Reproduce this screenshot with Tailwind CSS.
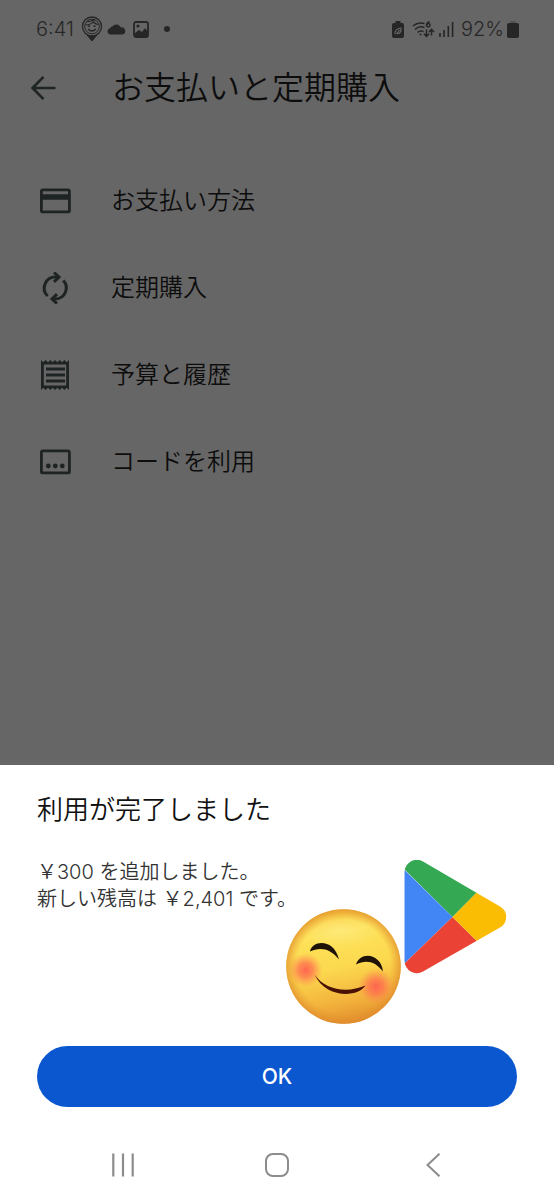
<!DOCTYPE html>
<html lang="ja">
<head>
<meta charset="utf-8">
<meta name="viewport" content="width=device-width, initial-scale=1">
<title>お支払いと定期購入</title>
<script src="https://cdn.jsdelivr.net/npm/@tailwindcss/browser@4"></script>
</head>
<body class="flex min-h-screen flex-col bg-[#666666] font-['Inter','Noto_Sans_CJK_JP',sans-serif] text-[#0d0d0d]">

<!-- Status bar -->
<div class="flex h-[58px] items-center justify-between pr-[35px] pl-9 text-xl text-[#262626]">
  <div class="flex items-center">
    <span class="font-[350]">6:41</span>
    <svg class="ml-[7px] h-[26px] w-[22px]" viewBox="0 0 22 26" fill="none" stroke="currentColor" aria-hidden="true">
      <path d="M6 19h10l-5 6z" fill="currentColor"/>
      <circle cx="11" cy="10.500" r="9.500" stroke-width="1.300" fill="#666666"/>
      <circle cx="11" cy="10.500" r="7.300" stroke-width="1"/>
      <path d="M4.500 9c3 0 6-1 8-3.500 1 2 3 3 5 3M6 5.500c3 .5 6-1 8-2" stroke-width="1.200"/>
      <path d="M7 10.500q1-1 2 0M12.500 10.500q1-1 2 0M7 13q4 4 8 0" stroke-width="1.200"/>
    </svg>
    <svg class="ml-1 h-3 w-[19px]" viewBox="0 0 19 12" fill="currentColor" aria-hidden="true"><path d="M3.500 11.500A3.200 3.200 0 0 1 3 5.200 3 3 0 0 1 5.200 3.500 5 5 0 0 1 13.800 4.500 3.600 3.600 0 0 1 15.500 11.500z"/></svg>
    <svg class="ml-[7px] h-[17px] w-4" viewBox="0 0 16 17" aria-hidden="true"><rect x="1" y="1" width="14" height="15" rx="2" fill="none" stroke="currentColor" stroke-width="1.800"/><path d="M2 12l4-3 3 2 3-4 3 4v4.500H2z" fill="currentColor"/><circle cx="5" cy="5" r="1.600" fill="currentColor"/></svg>
    <svg class="ml-[15px] size-1.5" viewBox="0 0 6 6" fill="currentColor" aria-hidden="true"><circle cx="3" cy="3" r="3"/></svg>
  </div>
  <div class="flex items-center">
    <svg class="h-[17px] w-3" viewBox="0 0 12 17" aria-hidden="true"><path d="M3.500 0h5v2H10a2 2 0 0 1 2 2v11a2 2 0 0 1-2 2H2a2 2 0 0 1-2-2V4a2 2 0 0 1 2-2h1.500z" fill="currentColor"/><path d="M3 13q-.5-5 6-6 .5 6-4 5.500L7.500 9" fill="none" stroke="#666666" stroke-width="1.200"/></svg>
    <svg class="ml-2 h-[18px] w-[23px]" viewBox="0 0 23 18" fill="none" stroke="currentColor" stroke-width="1.500" aria-hidden="true">
      <path d="M1 6Q6 1.500 12.500 3.500M3 9.500Q7 5.500 12.500 7.500M5.500 12.500Q8 10 11.500 11.500"/>
      <circle cx="8.500" cy="14.500" r="1" fill="currentColor" stroke="none"/>
      <path d="M17.500 1.500Q14.500 3 14.500 5.500"/><circle cx="16.300" cy="5.300" r="1.700"/>
      <path d="M14.500 9.500v6.500M12 13.800l2.500 2.700 2.500-2.700M19.500 15.500V9.500M17 12l2.500-2.700L22 12"/>
    </svg>
    <svg class="ml-1 h-4 w-[15px]" viewBox="0 0 15 16" stroke="currentColor" stroke-width="1.600" aria-hidden="true"><path d="M1 16v-4M5 16V9M9.300 16V5M13.600 16V1"/></svg>
    <span class="ml-[7px] font-[350]">92%</span>
    <svg class="ml-[3px] h-[17px] w-3" viewBox="0 0 12 17" aria-hidden="true"><path d="M3.500 0h5v3h-5z" fill="#505050"/><rect y="2" width="12" height="15" rx="2" fill="currentColor"/></svg>
  </div>
</div>

<main class="flex-1">
  <header class="flex h-[60px] items-center pl-[30px]">
    <button type="button" aria-label="戻る" class="w-[82px] text-[#1e2423]">
      <svg class="size-[26px]" viewBox="0 0 26 26" fill="none" stroke="currentColor" stroke-width="2.600" aria-hidden="true"><path d="M25.500 13H3M13.500 1.800L2.500 13l11 11.200"/></svg>
    </button>
    <h1 class="text-[32px] leading-[48px] font-[350]">お支払いと定期購入</h1>
  </header>

  <nav class="flex flex-col pt-[39px] text-2xl font-[350]">
    <a href="#methods" class="flex h-[87px] items-center pl-[39px]">
      <svg class="mr-10 size-8 text-[#1e2423]" viewBox="0 0 32 32" fill="none" stroke="currentColor" stroke-width="2.800" aria-hidden="true"><rect x="2.400" y="4.900" width="28" height="22" rx="1.500"/><path d="M2 12h29" stroke-width="5.500"/></svg>
      お支払い方法
    </a>
    <a href="#subscriptions" class="flex h-[87px] items-center pl-[39px]">
      <svg class="mr-10 size-8 text-[#1e2423]" viewBox="0 0 32 32" fill="none" stroke="currentColor" stroke-width="3" aria-hidden="true"><path d="M8.700 24A11 11 0 0 1 16.500 5H20M24.300 8.500A11 11 0 0 1 16.500 27H13"/><path d="M15 .5L20 5l-5 4.800M18 22.200L13 27l5 4.500"/></svg>
      定期購入
    </a>
    <a href="#budget" class="flex h-[87px] items-center pl-[39px]">
      <svg class="mr-10 size-8 text-[#1e2423]" viewBox="0 0 32 32" aria-hidden="true"><path fill="currentColor" fill-rule="evenodd" d="M2 1l2.300 2.300L6.600 1l2.400 2.300L11.300 1l2.400 2.300L16 1l2.300 2.300L20.700 1 23 3.300 25.400 1l2.300 2.300L30 1v30l-2.300-2.300L25.400 31 23 28.700 20.700 31l-2.400-2.300L16 31l-2.300-2.300L11.300 31 9 28.700 6.600 31l-2.300-2.300L2 31zM4.800 5.500v21h22.400v-21z"/><path d="M7 10h19M7 16h19M7 22h19" stroke="currentColor" stroke-width="2.800"/></svg>
      予算と履歴
    </a>
    <a href="#redeem" class="flex h-[87px] items-center pl-[39px]">
      <svg class="mr-10 size-8 text-[#1e2423]" viewBox="0 0 32 32" fill="none" stroke="currentColor" stroke-width="2.800" aria-hidden="true"><rect x="2.400" y="4.900" width="28" height="22" rx="1.500"/><g fill="currentColor" stroke="none"><circle cx="9.300" cy="20" r="2.400"/><circle cx="16.300" cy="20" r="2.400"/><circle cx="23.300" cy="20" r="2.400"/></g></svg>
      コードを利用
    </a>
  </nav>
</main>

<!-- Bottom sheet -->
<section role="dialog" aria-labelledby="sheet-title" class="relative bg-white px-[37px] pt-[25px]">
  <h2 id="sheet-title" class="text-[26px] leading-10 font-[350] text-[#111111]">利用が完了しました</h2>
  <p class="mt-[29px] text-xl leading-[27px] font-[350] text-[#333333]">￥300 を追加しました。<br>新しい残高は ￥2,401 です。</p>

  <svg class="absolute top-[95px] right-[47px] h-[165px] w-[221px]" viewBox="286 860 221 165" aria-hidden="true">
    <defs>
      <clipPath id="play"><path d="M404.500 872A12.300 12.300 0 0 1 423 861.500L500 906.500A12 12 0 0 1 500 927.500L423 971.500A12.300 12.300 0 0 1 404.500 961z"/></clipPath>
      <linearGradient id="face" x1="0.400" y1="0" x2="0.600" y2="1"><stop offset="0" stop-color="#f9c93c"/><stop offset=".2" stop-color="#fde25a"/><stop offset=".5" stop-color="#fcd94f"/><stop offset=".8" stop-color="#f2b13b"/><stop offset="1" stop-color="#e08c2c"/></linearGradient>
      <radialGradient id="rim"><stop offset=".82" stop-color="#e8962c" stop-opacity="0"/><stop offset="1" stop-color="#df8a2c" stop-opacity=".7"/></radialGradient>
      <radialGradient id="cheek"><stop offset="0" stop-color="#ff6050" stop-opacity=".95"/><stop offset=".45" stop-color="#ff6e50" stop-opacity=".7"/><stop offset="1" stop-color="#ff8a50" stop-opacity="0"/></radialGradient>
      <radialGradient id="shine"><stop offset="0" stop-color="#fff3a0" stop-opacity=".45"/><stop offset="1" stop-color="#fff3a0" stop-opacity="0"/></radialGradient>
    </defs>
    <g clip-path="url(#play)">
      <path fill="#34a853" d="M400 855h110v4L452.500 917 400 865z"/>
      <path fill="#4285f4" d="M400 865.500L452.500 917 400 968z"/>
      <path fill="#ea4335" d="M400 968l52.500-51L510 974v6H400z"/>
      <path fill="#fbbc04" d="M452.500 917L510 859v115z"/>
    </g>
    <circle cx="343.500" cy="966.500" r="57.300" fill="url(#face)"/>
    <ellipse cx="340" cy="930" rx="42" ry="18" fill="url(#shine)"/>
    <circle cx="343.500" cy="966.500" r="57.300" fill="url(#rim)"/>
    <circle cx="305.500" cy="970" r="17" fill="url(#cheek)"/>
    <circle cx="376" cy="986.500" r="18" fill="url(#cheek)"/>
    <g fill="#1d1205">
      <path d="M310 951.500C312 940 334 938 339 959.500 330 947.500 319 947 310 951.500z"/>
      <path d="M356 964.500C360 951 381 953 383 971.500 375 961 366 959.500 356 964.500z"/>
      <path fill="#4a1204" d="M314.500 974.500C325 990 347 993.500 365.500 985.500 358 997.500 326 999 314.500 974.500z"/>
    </g>
  </svg>

  <button type="button" class="mt-[133px] block h-[61px] w-full rounded-full bg-[#0b57d0] text-[21px] font-medium text-white">OK</button>

  <!-- System navigation -->
  <div class="flex h-[93px] items-center justify-between px-[70px] pt-[22px] text-[#8c8c8c]">
    <button type="button" aria-label="最近使ったアプリ"><svg class="block h-6 w-8" viewBox="0 0 32 24" stroke="currentColor" stroke-width="2.200" aria-hidden="true"><path d="M6.300.5v23M16 .5v23M25.700.5v23"/></svg></button>
    <button type="button" aria-label="ホーム"><svg class="block size-6" viewBox="0 0 24 24" fill="none" stroke="currentColor" stroke-width="2" aria-hidden="true"><rect x="1" y="1" width="22" height="22" rx="7"/></svg></button>
    <button type="button" aria-label="戻る"><svg class="block h-6 w-8" viewBox="0 0 32 24" fill="none" stroke="currentColor" stroke-width="2" aria-hidden="true"><path d="M24.500.7L12.500 12l12 11.300"/></svg></button>
  </div>
</section>
</body>
</html>
